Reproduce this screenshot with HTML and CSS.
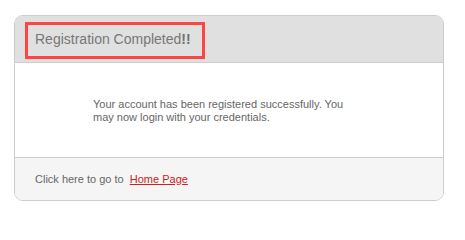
FILE: index.html
```html
<!DOCTYPE html>
<html>
<head>
<meta charset="utf-8">
<link rel="stylesheet" href="styles.css">
</head>
<body>
<div class="panel">
  <div class="panel-head">
    <h3 class="title">Registration Completed<span class="bang">!!</span></h3>
  </div>
  <div class="panel-body">
    <p class="msg">Your account has been registered successfully. You may now login with your credentials.</p>
  </div>
  <div class="panel-foot">
    Click here to go to&nbsp; <a class="link" href="#">Home Page</a>
  </div>
</div>
</body>
</html>
```
FILE: styles.css
```css
html, body { margin: 0; padding: 0; background: #fff; }
body {
  padding: 15px 0 0 14px;
  font-family: "Liberation Sans", Arial, sans-serif;
}
.panel {
  width: 430px;
  box-sizing: border-box;
  border: 1px solid #cccccc;
  border-radius: 9px;
  overflow: hidden;
}
.panel-head {
  background: #e0e0e0;
  border-bottom: 1px solid #cccccc;
  height: 47px;
  padding: 6px 0 0 10px;
  box-sizing: border-box;
}
.title {
  margin: 0;
  display: inline-block;
  width: 180px;
  height: 37px;
  box-sizing: border-box;
  border: 3px solid #ff4444;
  padding: 6px 0 0 7px;
  font-size: 14px;
  font-weight: normal;
  color: #777777;
  line-height: 17px;
}
.bang { font-weight: bold; color: #707070; }
.panel-body {
  background: #fff;
  border-bottom: 1px solid #cccccc;
  height: 95px;
  box-sizing: border-box;
  padding: 35px 90px 0 78px;
}
.msg {
  margin: 0;
  font-size: 11px;
  line-height: 13px;
  color: #666666;
}
.panel-foot {
  background: #f5f5f5;
  height: 42px;
  box-sizing: border-box;
  padding: 15px 0 0 20px;
  font-size: 11px;
  line-height: 13px;
  color: #666666;
}
.link { color: #cc2222; text-decoration: underline; }
```
